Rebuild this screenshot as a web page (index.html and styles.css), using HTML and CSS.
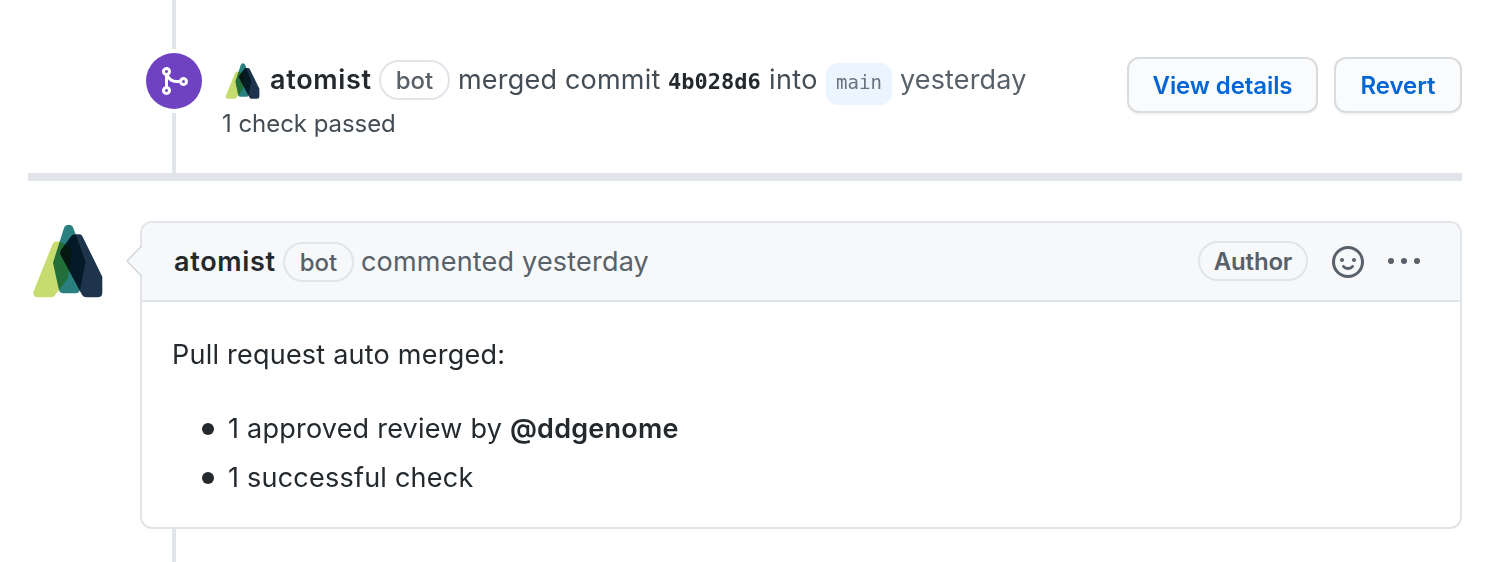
FILE: index.html
```html
<!DOCTYPE html>
<html lang="en">
<head>
<meta charset="utf-8">
<title>Pull request timeline</title>
<link rel="stylesheet" href="styles.css">
</head>
<body>
<svg class="defs" width="0" height="0" aria-hidden="true">
  <symbol id="logo" viewBox="30 30 220 240">
    <path class="shape" fill="#c6dc6f" d="M97 104Q102 94 112 94Q120 94 124 97L150 112Q156 117 155 126L144 200Q143 206 140 210L104 257Q100 262 94 262H53Q36 260 41 244Z"/>
    <path class="shape" fill="#2a7f7f" d="M132 54Q136 44 146 44Q156 44 160 54L197 155L180 240Q176 250 168 250H130Q120 250 117 240L99 158Z"/>
    <path class="shape" fill="#1e344d" d="M152 80Q158 73 166 73H178Q185 73 188 80L247 200V248Q247 262 232 262H200Q190 262 186 254L122 135Q118 128 123 120Z"/>
  </symbol>
</svg>
<main class="timeline">
  <section class="event">
    <div class="rail">
      <span class="rail-line rail-top"></span>
      <span class="badge">
        <svg width="32" height="32" viewBox="0 0 16 16" fill="#fff"><path fill-rule="evenodd" d="M5 3.254V3.25v.005a.75.75 0 110-.005v.004zm.45 1.9a2.25 2.25 0 10-1.95.218v5.256a2.25 2.25 0 101.5 0V7.123A5.735 5.735 0 009.25 9h1.378a2.25 2.25 0 100-1.5H9.25a4.25 4.25 0 01-3.8-2.346zM12.75 9a.75.75 0 100-1.5.75.75 0 000 1.5zm-8.5 4.5a.75.75 0 100-1.5.75.75 0 000 1.5z"/></svg>
      </span>
      <span class="rail-line rail-rest"></span>
    </div>
    <div class="event-body">
      <div class="event-line">
        <svg class="avatar-small" width="36" height="39"><use href="#logo"/></svg>
        <b class="author">atomist</b>
        <span class="label">bot</span>
        <span class="action">merged commit</span>
        <code class="sha">4b028d6</code>
        <span class="into">into</span>
        <code class="branch">main</code>
        <span class="when">yesterday</span>
      </div>
      <div class="checks">1 check passed</div>
    </div>
    <div class="buttons">
      <button class="btn btn-details">View details</button>
      <button class="btn btn-revert">Revert</button>
    </div>
  </section>
  <div class="divider"></div>
  <section class="comment-row">
    <svg class="avatar" width="73.3" height="80"><use href="#logo"/></svg>
    <article class="comment">
      <svg class="caret" width="17" height="34" viewBox="0 0 17 34"><path d="M17 2L2 17L17 32Z" fill="#f6f8fa"/><path d="M16.5 2L2 17L16.5 32" fill="none" stroke="#d1d5da" stroke-width="1.4"/></svg>
      <header class="comment-head">
        <b class="author">atomist</b>
        <span class="label">bot</span>
        <span class="commented">commented yesterday</span>
        <span class="label label-author">Author</span>
        <svg class="smiley" width="32" height="32" viewBox="0 0 16 16" fill="none" stroke="#586069" stroke-width="1.5"><circle cx="8" cy="8" r="7.25"/><path d="M5.75 10.25C6.7 11.6 9.3 11.6 10.25 10.25" stroke-linecap="round"/><circle cx="5" cy="7" r="1" fill="#586069" stroke="none"/><circle cx="11" cy="7" r="1" fill="#586069" stroke="none"/></svg>
        <svg class="kebab" width="32" height="32" viewBox="0 0 16 16" fill="#586069"><circle cx="1.5" cy="8" r="1.5"/><circle cx="8" cy="8" r="1.5"/><circle cx="14.5" cy="8" r="1.5"/></svg>
      </header>
      <div class="comment-body">
        <p class="para">Pull request auto merged:</p>
        <ul class="list">
          <li><span>1 approved review by <b class="mention">@ddgenome</b></span></li>
          <li><span>1 successful check</span></li>
        </ul>
      </div>
    </article>
  </section>
  <div class="tail"></div>
</main>
</body>
</html>
```
FILE: styles.css
```css
* { box-sizing: border-box; }
body {
  margin: 0;
  background: #fff;
  color: #24292e;
  font: 27px/40px Inter, "Liberation Sans", sans-serif;
}
.defs { position: absolute; }
.shape { mix-blend-mode: multiply; }
svg { display: block; flex: none; }
.timeline {
  display: flex;
  flex-direction: column;
  height: 562px;
  padding: 0 26px 0 28px;
  overflow: hidden;
}
.event { display: flex; height: 173px; }
.rail {
  display: flex;
  flex-direction: column;
  align-items: center;
  width: 56px;
  margin-left: 118px;
}
.rail-line { width: 4px; background: #e1e4e8; }
.rail-top { height: 49px; }
.rail-rest { flex: 1; }
.badge {
  display: flex;
  align-items: center;
  justify-content: center;
  width: 56px;
  height: 56px;
  margin: 4px 0;
  border-radius: 50%;
  background: #6f42c1;
}
.event-body { flex: 1; padding: 60px 0 0 20px; white-space: nowrap; }
.event-line { display: flex; height: 40px; color: #444d56; }
.avatar-small { margin: 1px 10.5px 0 1.5px; }
.author { width: 101px; font-weight: 600; color: #24292e; letter-spacing: .7px; }
.label {
  width: 71px;
  height: 40px;
  margin-left: 8px;
  border: 2px solid #e1e4e8;
  border-radius: 20px;
  color: #586069;
  font-size: 24px;
  font-weight: 500;
  line-height: 37px;
  text-align: center;
}
.action { width: 203px; margin-left: 8px; letter-spacing: .2px; }
.sha { width: 94px; margin-left: 7px; font: bold 22px/43px "DejaVu Sans Mono", monospace; color: #24292e; }
.into { width: 49px; margin-left: 7px; letter-spacing: .4px; }
.branch {
  width: 66px;
  height: 42px;
  margin: 3px 0 0 8px;
  border-radius: 12px;
  background: #eaf5ff;
  color: #6a737d;
  font: 19px/38px "DejaVu Sans Mono", monospace;
  text-align: center;
}
.when { margin-left: 8px; color: #586069; letter-spacing: .15px; }
.checks { height: 40px; padding-top: 4px; color: #444d56; font-size: 24px; letter-spacing: -.05px; }
.buttons { display: flex; gap: 16px; padding-top: 57px; }
.btn {
  height: 56px;
  padding: 2px 0 0;
  border: 2px solid #d9dbdd;
  border-radius: 12px;
  background: #fafbfc;
  box-shadow: 0 2px 0 rgba(27, 31, 35, .04);
  color: #0366d6;
  font: 600 24px/50px Inter, sans-serif;
  letter-spacing: -.1px;
}
.btn-details { width: 191px; }
.btn-revert { width: 128px; }
.divider { height: 8px; background: #e1e4e8; }
.comment-row { display: flex; height: 348px; padding-top: 40px; }
.avatar { margin: -1px 36.7px 0 2px; }
.comment {
  position: relative;
  flex: 1;
  height: 308px;
  border: 2px solid #e1e4e8;
  border-radius: 12px;
}
.caret { position: absolute; left: -17px; top: 21px; }
.comment-head {
  display: flex;
  height: 79px;
  padding: 19px 40px 0 32px;
  border-bottom: 2px solid #e1e4e8;
  border-radius: 10px 10px 0 0;
  background: #f6f8fa;
  white-space: nowrap;
}
.commented { margin-left: 7px; color: #586069; letter-spacing: .2px; }
.label-author { width: 110px; margin: -1px 0 0 auto; font-weight: 600; letter-spacing: -.2px; }
.smiley { margin: 4px 24px 0; }
.kebab { margin: 3px 0 0; }
.comment-body { padding: 33px 30px 0; letter-spacing: .23px; }
.para { margin: 0 0 34px; }
.list { margin: 0; padding: 0; list-style: none; }
.list li { display: flex; gap: 14px; height: 49px; padding-left: 30px; }
.list li::before {
  content: "";
  width: 12px;
  height: 12px;
  margin-top: 14px;
  border-radius: 50%;
  background: #24292e;
}
.mention { font-weight: 600; }
.tail { width: 4px; flex: 1; margin-left: 144px; background: #e1e4e8; }
```
